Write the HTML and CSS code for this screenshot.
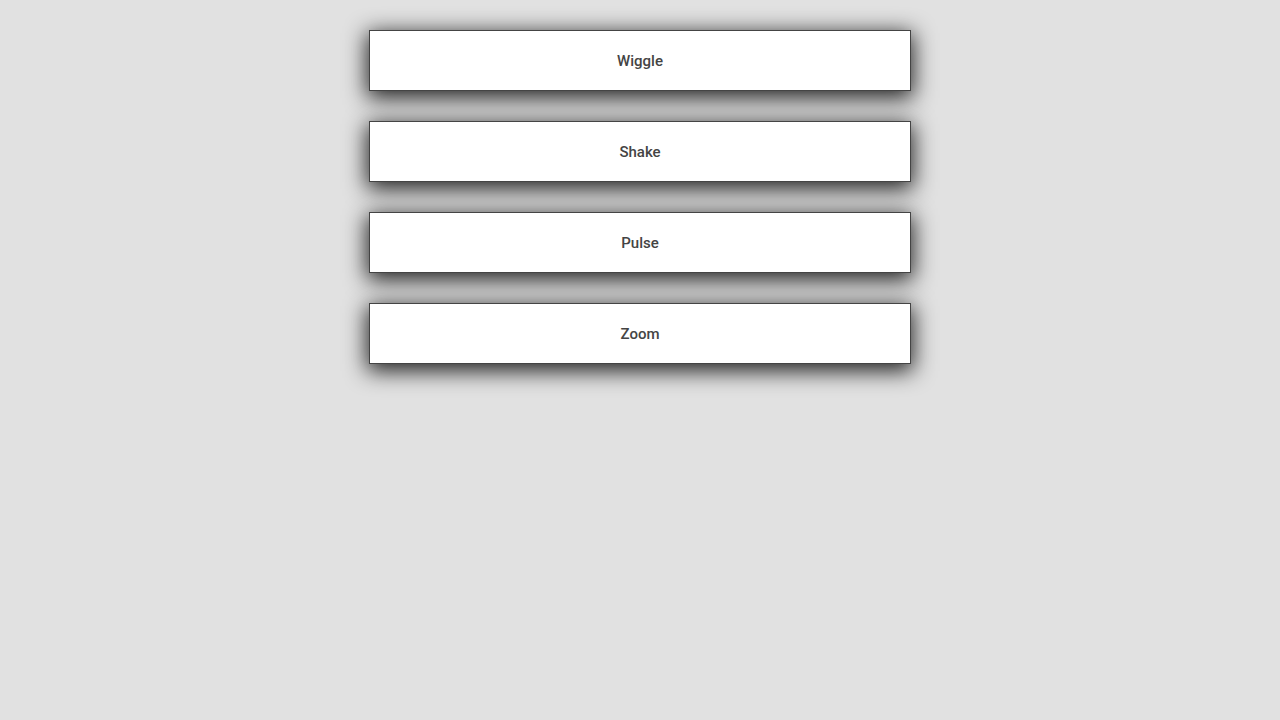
FILE: index.html
```html
<!DOCTYPE html>
<html>
<head>
<meta charset="utf-8">
<link rel="stylesheet" href="styles.css">
</head>
<body>
<div class="list">
  <div class="item">Wiggle</div>
  <div class="item">Shake</div>
  <div class="item">Pulse</div>
  <div class="item">Zoom</div>
</div>
</body>
</html>
```
FILE: styles.css
```css
html, body {
  margin: 0;
  padding: 0;
  background: #e1e1e1;
  height: 100%;
}
.list {
  display: flex;
  flex-direction: column;
  align-items: center;
  gap: 30px;
  padding-top: 30px;
}
.item {
  box-sizing: border-box;
  width: 542px;
  height: 61px;
  background: #fff;
  border: 1px solid #444;
  display: flex;
  align-items: center;
  justify-content: center;
  font-family: Roboto, sans-serif;
  font-size: 15px;
  font-weight: 500;
  color: #444;
  box-shadow: 0 5px 22px 2px rgba(0,0,0,0.85);
}
```
